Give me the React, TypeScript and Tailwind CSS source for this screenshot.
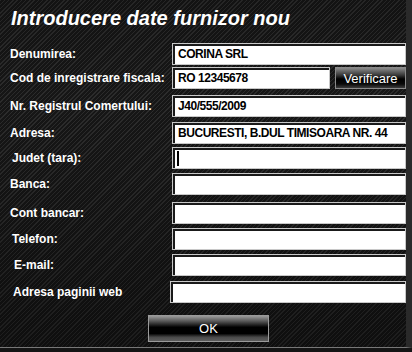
import React from 'react';

type Row = {
  label: string;
  value?: string;
  gap: string;
  labelPad: string;
  inputLeft: string;
  cursor?: boolean;
  verify?: boolean;
};

const rows: Row[] = [
  { label: 'Denumirea:', value: 'CORINA SRL', gap: 'mt-0', labelPad: 'pl-[10px]', inputLeft: 'ml-[172px]' },
  { label: 'Cod de inregistrare fiscala:', value: 'RO 12345678', gap: 'mt-[2px]', labelPad: 'pl-[10px]', inputLeft: 'ml-[172px]', verify: true },
  { label: 'Nr. Registrul Comertului:', value: 'J40/555/2009', gap: 'mt-[6px]', labelPad: 'pl-[10px]', inputLeft: 'ml-[172px]' },
  { label: 'Adresa:', value: 'BUCURESTI, B.DUL TIMISOARA NR. 44', gap: 'mt-[5px]', labelPad: 'pl-[10px]', inputLeft: 'ml-[172px]' },
  { label: 'Judet (tara):', gap: 'mt-[3px]', labelPad: 'pl-[12px]', inputLeft: 'ml-[172px]', cursor: true },
  { label: 'Banca:', gap: 'mt-[4px]', labelPad: 'pl-[10px]', inputLeft: 'ml-[172px]' },
  { label: 'Cont bancar:', gap: 'mt-[7px]', labelPad: 'pl-[10px]', inputLeft: 'ml-[172px]' },
  { label: 'Telefon:', gap: 'mt-[4px]', labelPad: 'pl-[12px]', inputLeft: 'ml-[172px]' },
  { label: 'E-mail:', gap: 'mt-[4px]', labelPad: 'pl-[14px]', inputLeft: 'ml-[172px]' },
  { label: 'Adresa paginii web', gap: 'mt-[5px]', labelPad: 'pl-[13px]', inputLeft: 'ml-[170px]' },
];

const Field: React.FC<{ row: Row }> = ({ row }) => (
  <div
    className={`h-[22px] bg-white border border-[#c8c8c8] shadow-[inset_2px_2px_0_#1a1a1a] flex items-center pl-[5px] text-[12px] font-bold text-black tracking-[-0.45px] whitespace-nowrap ${
      row.verify ? 'w-[158px]' : 'flex-1'
    }`}
  >
    {row.value}
    {row.cursor && <span className="w-[2px] h-[15px] bg-black ml-[-1px]" />}
  </div>
);

export default function App() {
  return (
    <div className="w-[412px] h-[352px] overflow-hidden bg-[#141414] font-['Liberation_Sans',Arial,sans-serif]">
      <div className="relative w-[412px] h-[348px] bg-[repeating-linear-gradient(135deg,#2c2c2c_0px,#2c2c2c_1px,#161616_1px,#161616_3px)] border-r-[6px] border-[#2a2a2a] border-b border-b-[#777]">
        <div className="absolute inset-0 bg-[linear-gradient(180deg,rgba(0,0,0,0.15)_0%,rgba(0,0,0,0)_30%,rgba(0,0,0,0.25)_80%,rgba(0,0,0,0.35)_100%)]" />
        <div className="relative flex flex-col">
          <h1 className="pl-[11px] pt-[6px] h-[43px] text-[20px] leading-[24px] font-bold italic text-white">
            Introducere date furnizor nou
          </h1>
          {rows.map((row) => (
            <div key={row.label} className={`relative flex items-center h-[22px] ${row.gap}`}>
              <span
                className={`absolute left-0 ${row.labelPad} text-[12px] font-bold text-white whitespace-nowrap`}
              >
                {row.label}
              </span>
              <div className={`flex flex-1 items-center ${row.inputLeft}`}>
                <Field row={row} />
                {row.verify && (
                  <button className="ml-[5px] w-[71px] h-[22px] border border-[#8a8a8a] bg-[linear-gradient(180deg,#8a8a8a_0%,#3a3a3a_35%,#000_55%,#0a0a0a_80%,#3d3d3d_100%)] text-white text-[13px] leading-none">
                    Verificare
                  </button>
                )}
              </div>
            </div>
          ))}
          <div className="flex mt-[12px] pl-[148px]">
            <button className="w-[121px] h-[27px] border border-[#9a9a9a] bg-[linear-gradient(180deg,#9a9a9a_0%,#5a5a5a_20%,#000_45%,#000_70%,#4a4a4a_85%,#5d5d5d_100%)] text-white text-[13px] leading-none">
              OK
            </button>
          </div>
        </div>
      </div>
    </div>
  );
}
